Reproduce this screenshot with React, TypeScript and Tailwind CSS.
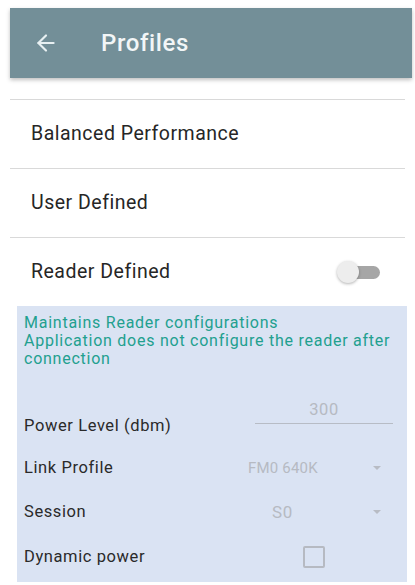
import { ArrowLeft } from "lucide-react";

function Divider() {
  return <div className="mx-[10px] h-px bg-[#d9d9d9]" />;
}

function ProfileRow({ label, toggle }: { label: string; toggle?: boolean }) {
  return (
    <div className="flex h-[68px] items-center justify-between pl-[31px] pr-[33px]">
      <span className="text-[19.5px] tracking-[0.5px] text-[#262626]">{label}</span>
      {toggle && (
        <div className="relative h-[22px] w-[46px]">
          <div className="absolute right-[2px] top-[5px] h-[13px] w-[34px] rounded-full bg-[#a6a6a6]" />
          <div className="absolute left-[1px] top-0 h-[22px] w-[22px] rounded-full bg-[#ededed] shadow-[0_1px_3px_rgba(0,0,0,0.3)]" />
        </div>
      )}
    </div>
  );
}

function Caret() {
  return <div className="h-0 w-0 border-x-[4.5px] border-t-[4px] border-x-transparent border-t-[#b8bcc4]" />;
}

export default function App() {
  return (
    <div className="min-h-[585px] w-[415px] bg-white pt-2" style={{ fontFamily: "Roboto, 'Liberation Sans', sans-serif" }}>
      {/* Toolbar */}
      <header className="ml-[10px] mr-[3px] flex h-[70px] items-center bg-[#738f98] shadow-[0_2px_4px_rgba(0,0,0,0.25)]">
        <ArrowLeft className="ml-[23px] h-[26px] w-[26px] text-[#e8f0f2]" strokeWidth={2} />
        <span className="ml-[42px] text-[24px] font-medium tracking-[0.6px] text-[#f2f6f7]">Profiles</span>
      </header>

      <div className="h-[21px]" />
      <Divider />
      <ProfileRow label="Balanced Performance" />
      <Divider />
      <ProfileRow label="User Defined" />
      <Divider />
      <ProfileRow label="Reader Defined" toggle />

      {/* Details panel */}
      <section className="ml-[17px] mr-[8px] bg-[#dae3f3] pb-[14px] pl-[7px] pr-[10px] pt-[8px]">
        <p className="text-[16px] leading-[18px] tracking-[0.75px] text-[#22a08f]">
          Maintains Reader configurations
          <br />
          Application does not configure the reader after connection
        </p>

        <div className="mt-[32px] flex items-start justify-between">
          <span className="pt-[16px] text-[16.5px] leading-[20px] tracking-[0.6px] text-[#2a2a2a]">Power Level (dbm)</span>
          <div className="mr-[4px] w-[138px] border-b border-[#b7bcc5] pb-[3px] text-center text-[16.5px] leading-[20px] tracking-[0.6px] text-[#b6bac2]">
            300
          </div>
        </div>

        <div className="mt-[22px] flex h-[20px] items-center">
          <span className="w-[224px] text-[16.5px] leading-[20px] tracking-[0.6px] text-[#2a2a2a]">Link Profile</span>
          <span className="w-[125px] text-[15px] leading-[20px] tracking-[0.2px] text-[#b6bac2]">FM0 640K</span>
          <Caret />
        </div>

        <div className="mt-[24px] flex h-[20px] items-center">
          <span className="w-[224px] text-[16.5px] leading-[20px] tracking-[0.6px] text-[#2a2a2a]">Session</span>
          <span className="w-[125px] pl-[24px] text-[17px] leading-[20px] tracking-[0.6px] text-[#b6bac2]">S0</span>
          <Caret />
        </div>

        <div className="mt-[24px] flex items-center">
          <span className="w-[279px] text-[16.5px] leading-[20px] tracking-[0.6px] text-[#2a2a2a]">Dynamic power</span>
          <div className="h-[22px] w-[22px] rounded-[2px] border-2 border-[#b6bac2]" />
        </div>
      </section>
    </div>
  );
}
